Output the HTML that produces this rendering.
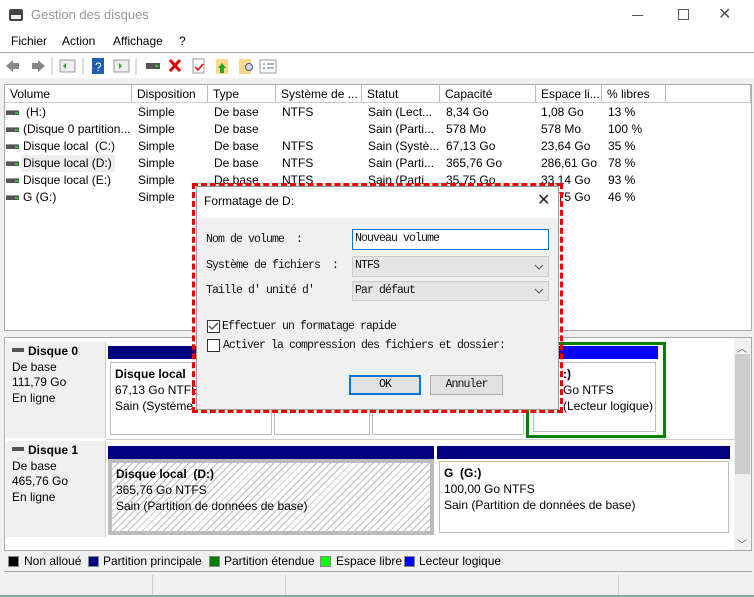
<!DOCTYPE html>
<html><head><meta charset="utf-8"><style>
*{margin:0;padding:0;box-sizing:border-box}
body{width:754px;height:597px;position:relative;overflow:hidden;background:#f0f0f0;font-family:"Segoe UI","Liberation Sans",sans-serif;font-size:12px;color:#000}
.a{position:absolute;white-space:nowrap}
.mono{font-family:"Liberation Mono",monospace;font-size:11.5px;letter-spacing:-0.9px;color:#111}
.hd{position:absolute;top:85px;height:18px;background:#fff;border-right:1px solid #bbb;border-bottom:1px solid #ccc;padding:2px 0 0 5px;font-size:12px}
.ic{display:inline-block;width:13px;height:5px;background:#555;border-top:1px solid #999;position:absolute;left:6px}
.ic:after{content:"";position:absolute;right:1px;top:1px;width:3px;height:2px;background:#2c2}
.bar{position:absolute;background:#000080}
.box{position:absolute;background:#fff;border:1px solid #bbb;padding:3px 4px;line-height:16px;overflow:hidden;white-space:nowrap}
.lg{position:absolute;top:556px;width:11px;height:11px;border:1px solid #888}
</style></head><body>
<div class="a" style="left:0;top:0;width:754px;height:53px;background:#fff;border-bottom:1px solid #aaa"></div>
<div class="a" style="left:9px;top:9px;width:14px;height:12px;background:#444;border-radius:2px"></div>
<div class="a" style="left:11px;top:15px;width:10px;height:4px;background:#eee"></div>
<div class="a" style="left:31px;top:7px;color:#999;font-size:13px">Gestion des disques</div>
<div class="a" style="left:632px;top:15px;width:11px;height:1px;background:#555"></div>
<div class="a" style="left:678px;top:9px;width:11px;height:11px;border:1px solid #555"></div>
<div class="a" style="left:718px;top:4px;color:#555;font-size:16px">✕</div>
<div class="a" style="left:11px;top:34px">Fichier</div>
<div class="a" style="left:62px;top:34px">Action</div>
<div class="a" style="left:113px;top:34px">Affichage</div>
<div class="a" style="left:179px;top:34px">?</div>
<div class="a" style="left:0;top:54px;width:754px;height:24px;background:#fff"></div>
<svg class="a" style="left:0;top:54px" width="290" height="24">
<path d="M6 12l7-6v3h6v6h-6v3z" fill="#888"/><path d="M45 12l-7-6v3h-6v6h6v3z" fill="#888"/>
<line x1="52" y1="4" x2="52" y2="21" stroke="#bbb"/>
<rect x="60" y="6" width="15" height="12" fill="#eee" stroke="#999"/><path d="M66 9l-3 3 3 3z" fill="#393"/>
<line x1="83" y1="4" x2="83" y2="21" stroke="#bbb"/>
<rect x="92" y="4" width="12" height="16" fill="#1e5fb4"/><text x="95" y="17" fill="#fff" font-size="12" font-family="Liberation Sans">?</text>
<rect x="114" y="6" width="15" height="12" fill="#eee" stroke="#999"/><path d="M119 9l3 3-3 3z" fill="#393"/>
<line x1="136" y1="4" x2="136" y2="21" stroke="#bbb"/>
<rect x="146" y="9" width="14" height="6" fill="#555"/><rect x="155" y="11" width="3" height="2" fill="#2c2"/>
<path d="M170 6l10 11M180 6l-10 11" stroke="#d00" stroke-width="3"/>
<rect x="193" y="5" width="11" height="14" fill="#fff" stroke="#999"/><path d="M195 13l3 3 5-6" stroke="#d00" fill="none" stroke-width="1.5"/>
<rect x="216" y="5" width="12" height="15" fill="#fbd98a"/><path d="M222 9l-4 5h8z M220 14h4v5h-4z" fill="#2a2"/>
<rect x="239" y="5" width="12" height="15" fill="#fbd98a"/><circle cx="249" cy="13" r="3.5" fill="#cde" stroke="#557"/>
<rect x="260" y="6" width="16" height="13" fill="#fff" stroke="#999"/><path d="M263 10h2M263 14h2M267 10h7M267 14h7" stroke="#46a"/>
</svg>
<div class="a" style="left:4px;top:84px;width:748px;height:247px;background:#fff;border:1px solid #aaa"></div>
<div class="hd" style="left:5px;width:127px">Volume</div>
<div class="hd" style="left:132px;width:76px">Disposition</div>
<div class="hd" style="left:208px;width:68px">Type</div>
<div class="hd" style="left:276px;width:86px">Système de ...</div>
<div class="hd" style="left:362px;width:78px">Statut</div>
<div class="hd" style="left:440px;width:96px">Capacité</div>
<div class="hd" style="left:536px;width:66px">Espace li...</div>
<div class="hd" style="left:602px;width:64px">% libres</div>
<div class="hd" style="left:666px;width:85px"></div>
<div class="a" style="left:21px;top:155px;width:94px;height:17px;background:#eee"></div>
<div class="a" style="left:0;top:104px;width:754px;line-height:17px">
<div style="position:relative;height:17px"><span class="ic" style="top:6px"></span><span class="a" style="left:26px">(H:)</span><span class="a" style="left:138px">Simple</span><span class="a" style="left:214px">De base</span><span class="a" style="left:282px">NTFS</span><span class="a" style="left:368px">Sain (Lect...</span><span class="a" style="left:446px">8,34 Go</span><span class="a" style="left:541px">1,08 Go</span><span class="a" style="left:608px">13 %</span></div>
<div style="position:relative;height:17px"><span class="ic" style="top:6px"></span><span class="a" style="left:23px">(Disque 0 partition...</span><span class="a" style="left:138px">Simple</span><span class="a" style="left:214px">De base</span><span class="a" style="left:368px">Sain (Parti...</span><span class="a" style="left:446px">578 Mo</span><span class="a" style="left:541px">578 Mo</span><span class="a" style="left:608px">100 %</span></div>
<div style="position:relative;height:17px"><span class="ic" style="top:6px"></span><span class="a" style="left:23px">Disque local &nbsp;(C:)</span><span class="a" style="left:138px">Simple</span><span class="a" style="left:214px">De base</span><span class="a" style="left:282px">NTFS</span><span class="a" style="left:368px">Sain (Systè...</span><span class="a" style="left:446px">67,13 Go</span><span class="a" style="left:541px">23,64 Go</span><span class="a" style="left:608px">35 %</span></div>
<div style="position:relative;height:17px"><span class="ic" style="top:6px"></span><span class="a" style="left:23px">Disque local (D:)</span><span class="a" style="left:138px">Simple</span><span class="a" style="left:214px">De base</span><span class="a" style="left:282px">NTFS</span><span class="a" style="left:368px">Sain (Parti...</span><span class="a" style="left:446px">365,76 Go</span><span class="a" style="left:541px">286,61 Go</span><span class="a" style="left:608px">78 %</span></div>
<div style="position:relative;height:17px"><span class="ic" style="top:6px"></span><span class="a" style="left:23px">Disque local (E:)</span><span class="a" style="left:138px">Simple</span><span class="a" style="left:214px">De base</span><span class="a" style="left:282px">NTFS</span><span class="a" style="left:368px">Sain (Parti</span><span class="a" style="left:446px">35,75 Go</span><span class="a" style="left:541px">33,14 Go</span><span class="a" style="left:608px">93 %</span></div>
<div style="position:relative;height:17px"><span class="ic" style="top:6px"></span><span class="a" style="left:23px">G (G:)</span><span class="a" style="left:138px">Simple</span><span class="a" style="left:214px">De base</span><span class="a" style="left:282px">NTFS</span><span class="a" style="left:368px">Sain (Parti</span><span class="a" style="left:446px">100,00 Go</span><span class="a" style="left:541px">96,75 Go</span><span class="a" style="left:608px">46 %</span></div>
</div>
<div class="a" style="left:4px;top:337px;width:748px;height:214px;background:#fff;border:1px solid #aaa"></div>
<div class="a" style="left:734px;top:338px;width:17px;height:212px;background:#f0f0f0"></div>
<div class="a" style="left:735px;top:354px;width:15px;height:120px;background:#cdcdcd"></div>
<div class="a" style="left:737px;top:340px;font-size:10px;color:#555">︿</div>
<div class="a" style="left:737px;top:536px;font-size:10px;color:#555">﹀</div>
<div class="a" style="left:6px;top:342px;width:100px;height:96px;background:#f0f0f0;border-right:1px solid #ccc"></div>
<div class="a" style="left:6px;top:441px;width:100px;height:96px;background:#f0f0f0;border-right:1px solid #ccc"></div>
<div class="a" style="left:12px;top:344px;line-height:15.5px"><span style="display:inline-block;width:12px;height:4px;background:#555;margin-right:4px;vertical-align:3px"></span><b>Disque 0</b><br>De base<br>111,79 Go<br>En ligne</div>
<div class="a" style="left:12px;top:443px;line-height:15.5px"><span style="display:inline-block;width:12px;height:4px;background:#555;margin-right:4px;vertical-align:3px"></span><b>Disque 1</b><br>De base<br>465,76 Go<br>En ligne</div>
<div class="a" style="left:106px;top:439px;width:628px;height:1px;background:#ccc"></div>
<div class="bar" style="left:108px;top:346px;width:420px;height:13px"></div>
<div class="box" style="left:110px;top:362px;width:162px;height:73px"><b>Disque local</b><br>67,13 Go NTFS<br>Sain (Système,</div>
<div class="box" style="left:274px;top:362px;width:96px;height:73px"></div>
<div class="box" style="left:372px;top:362px;width:152px;height:73px"></div>
<div class="a" style="left:526px;top:342px;width:140px;height:96px;border:3px solid #008000;background:#fff"></div>
<div class="a" style="left:531px;top:346px;width:127px;height:13px;background:#0000ff"></div>
<div class="box" style="left:533px;top:362px;width:123px;height:70px;padding-left:29px;padding-right:0"><b>:)</b><br>Go NTFS<br>(Lecteur logique)</div>
<div class="bar" style="left:108px;top:446px;width:326px;height:13px"></div>
<div class="bar" style="left:437px;top:446px;width:293px;height:13px"></div>
<div class="a" style="left:108px;top:459px;width:326px;height:76px;background:#bbb"></div>
<div class="box" style="left:111px;top:462px;width:320px;height:70px;background:repeating-linear-gradient(135deg,#fff 0 4px,#bbb 4px 5px)"><b>Disque local &nbsp;(D:)</b><br>365,76 Go NTFS<br>Sain (Partition de données de base)</div>
<div class="box" style="left:439px;top:461px;width:290px;height:72px"><b>G &nbsp;(G:)</b><br>100,00 Go NTFS<br>Sain (Partition de données de base)</div>
<div class="a" style="left:4px;top:552px;width:748px;height:20px;border-bottom:1px solid #aaa"></div>
<div class="lg" style="left:8px;background:#000"></div><div class="a" style="left:24px;top:554px">Non alloué</div>
<div class="lg" style="left:88px;background:#000080"></div><div class="a" style="left:103px;top:554px">Partition principale</div>
<div class="lg" style="left:209px;background:#008000"></div><div class="a" style="left:224px;top:554px">Partition étendue</div>
<div class="lg" style="left:320px;background:#00ff00"></div><div class="a" style="left:336px;top:554px">Espace libre</div>
<div class="lg" style="left:404px;background:#0000ff"></div><div class="a" style="left:419px;top:554px">Lecteur logique</div>
<div class="a" style="left:152px;top:575px;width:1px;height:20px;background:#ccc"></div>
<div class="a" style="left:285px;top:575px;width:1px;height:20px;background:#ccc"></div>
<div class="a" style="left:618px;top:575px;width:1px;height:20px;background:#ccc"></div>
<div class="a" style="left:0;top:595px;width:754px;height:2px;background:#8aa"></div>
<div class="a" style="left:192px;top:183px;width:371px;height:230px;border:3px dashed #e00"></div>
<div class="a" style="left:196px;top:186px;width:363px;height:224px;background:#f0f0f0;border:1px solid #999"></div>
<div class="a" style="left:197px;top:187px;width:361px;height:31px;background:#fff"></div>
<div class="a" style="left:204px;top:194px;font-size:12px">Formatage de D:</div>
<div class="a" style="left:537px;top:190px;font-size:16px;color:#222">✕</div>
<div class="a mono" style="left:206px;top:233px">Nom de volume &nbsp;:</div>
<div class="a mono" style="left:206px;top:259px">Système de fichiers &nbsp;:</div>
<div class="a mono" style="left:206px;top:284px">Taille d' unité d'</div>
<div class="a" style="left:352px;top:229px;width:197px;height:21px;background:#fff;border:1px solid #0078d7"></div>
<div class="a mono" style="left:355px;top:232px">Nouveau volume</div>
<div class="a" style="left:352px;top:256px;width:197px;height:21px;background:#e5e5e5;border:1px solid #ccc"></div>
<div class="a mono" style="left:355px;top:259px">NTFS</div>
<div class="a" style="left:352px;top:281px;width:197px;height:20px;background:#e5e5e5;border:1px solid #ccc"></div>
<div class="a mono" style="left:355px;top:284px">Par défaut</div>
<svg class="a" style="left:534px;top:262px" width="10" height="34"><path d="M1 3l4 4 4-4M1 27l4 4 4-4" stroke="#555" fill="none"/></svg>
<div class="a" style="left:207px;top:320px;width:13px;height:13px;background:#fff;border:1px solid #333"></div>
<svg class="a" style="left:207px;top:320px" width="13" height="13"><path d="M2 6l3 3 6-6" stroke="#555" stroke-width="1.5" fill="none"/></svg>
<div class="a mono" style="left:222px;top:320px">Effectuer un formatage rapide</div>
<div class="a" style="left:207px;top:339px;width:13px;height:13px;background:#fff;border:1px solid #333"></div>
<div class="a mono" style="left:223px;top:339px">Activer la compression des fichiers et dossier:</div>
<div class="a mono" style="left:349px;top:375px;width:72px;height:20px;background:#e1e1e1;border:2px solid #0078d7;text-align:center;line-height:16px">OK</div>
<div class="a mono" style="left:430px;top:375px;width:73px;height:20px;background:#e1e1e1;border:1px solid #adadad;text-align:center;line-height:18px">Annuler</div>
</body></html>
